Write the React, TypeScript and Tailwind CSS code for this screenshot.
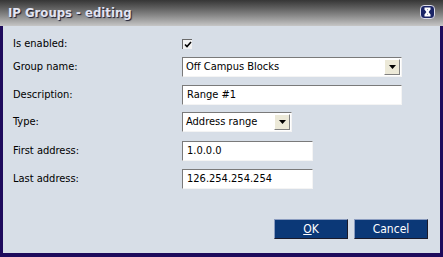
import React from 'react';

const font = { fontFamily: '"DejaVu Sans Condensed", "Liberation Sans", sans-serif' };

function TextBox({ value, width }: { value: string; width: string }) {
  return (
    <div
      className={`flex h-[20px] ${width} items-center border border-t-[#7a7a7a] border-l-[#7a7a7a] border-r-[#f4f4f4] border-b-[#f4f4f4] bg-white pl-[4px] text-[11px] text-black`}
    >
      {value}
    </div>
  );
}

function SelectBox({ value, width }: { value: string; width: string }) {
  return (
    <div
      className={`flex h-[20px] ${width} items-center border border-t-[#7a7a7a] border-l-[#7a7a7a] border-r-[#f4f4f4] border-b-[#f4f4f4] bg-white text-[11px] text-black`}
    >
      <span className="flex-1 pl-[3px]">{value}</span>
      <div className="mr-[1px] flex h-[16px] w-[16px] items-center justify-center border border-t-white border-l-white border-r-[#808080] border-b-[#808080] bg-[#ece9d8]">
        <svg width="7" height="4" viewBox="0 0 7 4">
          <path d="M0 0h7L3.5 4z" fill="#000" />
        </svg>
      </div>
    </div>
  );
}

function Row({ label, children, className }: { label: string; children: React.ReactNode; className: string }) {
  return (
    <div className={`flex items-center ${className}`}>
      <div className="w-[169px] text-[11px] text-black">{label}</div>
      {children}
    </div>
  );
}

function Button({ children }: { children: React.ReactNode }) {
  return (
    <button className="flex h-[20px] w-[74px] items-center justify-center border border-t-[#8a9cc0] border-l-[#8a9cc0] border-r-[#1a1a2a] border-b-[#1a1a2a] bg-[#0b3877] text-[12px] text-white">
      {children}
    </button>
  );
}

export default function App() {
  return (
    <div className="flex h-[257px] w-[443px] flex-col bg-[#1e0b5c]" style={font}>
      <div className="flex h-[26px] items-center justify-between bg-gradient-to-b from-[#363636] to-[#c6c6c6] pl-[8px] pr-[8px]">
        <span className="text-[13px] font-bold text-[#e2e4f2] [text-shadow:1px_1px_1px_#1a1a30]">
          IP Groups - editing
        </span>
        <svg width="15" height="14" viewBox="0 0 15 14" className="-mt-[3px]">
          <rect x="0.5" y="0.5" width="14" height="13" rx="3.5" fill="#1a2466" stroke="#dcdce8" />
          <path d="M4.5 3.5h6M4.5 10.5h6M5 3.5l5 7M10 3.5l-5 7" stroke="#fff" strokeWidth="2" />
        </svg>
      </div>
      <div className="mx-[3px] mb-[4px] flex flex-1 flex-col bg-[#d7dee7] pl-[10px] pr-[12px] pt-[9px]">
        <Row label="Is enabled:" className="h-[18px]">
          <div className="flex h-[10px] w-[10px] items-center justify-center border-t border-l border-t-[#6a6a6a] border-l-[#6a6a6a] bg-[#f2f2f2]">
            <svg width="8" height="7" viewBox="0 0 8 7">
              <path d="M1 3.5l2 2 4-4.5" stroke="#000" strokeWidth="1.6" fill="none" />
            </svg>
          </div>
        </Row>
        <Row label="Group name:" className="mt-[4px]">
          <SelectBox value="Off Campus Blocks" width="w-[220px]" />
        </Row>
        <Row label="Description:" className="mt-[8px]">
          <TextBox value="Range #1" width="w-[220px]" />
        </Row>
        <Row label="Type:" className="mt-[7px]">
          <SelectBox value="Address range" width="w-[110px]" />
        </Row>
        <Row label="First address:" className="mt-[9px]">
          <TextBox value="1.0.0.0" width="w-[131px]" />
        </Row>
        <Row label="Last address:" className="mt-[8px]">
          <TextBox value="126.254.254.254" width="w-[131px]" />
        </Row>
        <div className="mt-[30px] flex justify-end gap-[6px]">
          <Button>
            <span className="underline">O</span>K
          </Button>
          <Button>Cancel</Button>
        </div>
      </div>
    </div>
  );
}
